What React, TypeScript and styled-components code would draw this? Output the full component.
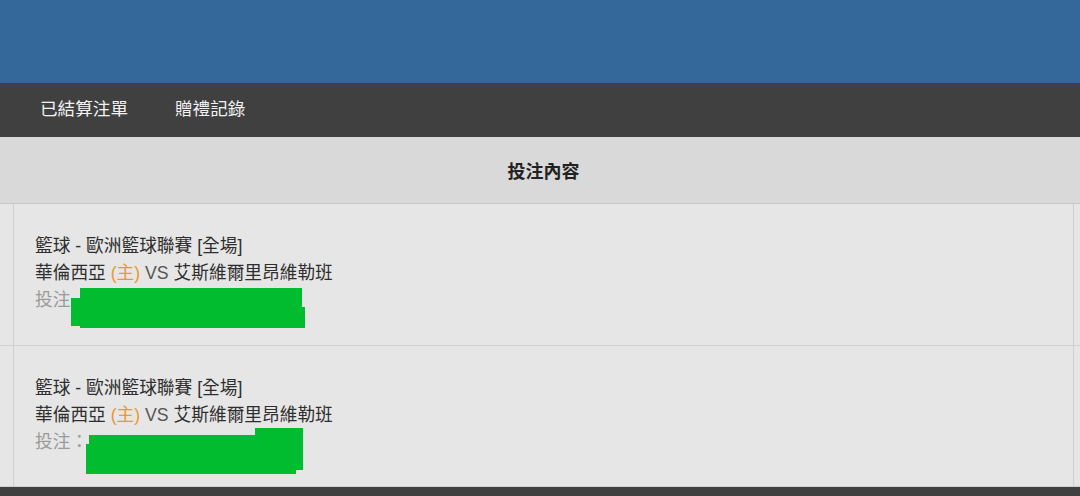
import React from "react";
import styled, { createGlobalStyle } from "styled-components";

const Global = createGlobalStyle`
  html, body { margin: 0; padding: 0; background: #404040; }
  body {
    font-family: "Liberation Sans", "Noto Sans CJK TC", sans-serif;
    width: 1080px;
    height: 496px;
    overflow: hidden;
  }
`;

const Page = styled.div`
  display: flex;
  flex-direction: column;
  width: 1080px;
  height: 496px;
  background: #404040;
`;

const TopBar = styled.header`
  height: 83px;
  background: #34679a;
`;

const Nav = styled.nav`
  height: 54px;
  background: #404040;
  display: flex;
  align-items: center;
  gap: 47px;
  padding-left: 40px;
`;

const NavItem = styled.a`
  color: #f2f2f2;
  font-size: 17.6px;
  line-height: 1;
  text-decoration: none;
`;

const Table = styled.div`
  display: grid;
  grid-template-columns: 13px 1fr 6px;
  background: #e6e6e6;
`;

const HeadCell = styled.div`
  height: 66px;
  background: #d9d9d9;
  border-bottom: 1px solid #c8c8c8;
  display: flex;
  align-items: center;
  justify-content: center;
  font-weight: bold;
  font-size: 18px;
  color: #222;
`;

const SideCell = styled.div`
  background: #e6e6e6;
  border-bottom: 1px solid #d0d0d0;
`;

const BodyCell = styled.div`
  height: 141.5px;
  box-sizing: border-box;
  padding: 29px 0 0 21px;
  border-left: 1px solid #d0d0d0;
  border-right: 1px solid #d0d0d0;
  border-bottom: 1px solid #d0d0d0;
  display: flex;
  flex-direction: column;
`;

const Line = styled.div<{ $muted?: boolean }>`
  position: relative;
  font-size: 17.7px;
  line-height: 27px;
  color: ${(p) => (p.$muted ? "#9a9a9a" : "#2e2e2e")};
  white-space: nowrap;
`;

const Home = styled.span`
  color: #f0962e;
`;

const Vs = styled.span`
  color: #555;
`;

const Redact = styled.svg`
  position: absolute;
  pointer-events: none;
`;

const Footer = styled.div`
  flex: 1;
  background: #404040;
`;

type Row = {
  betLabel: string;
  redact: { left: number; top: number; w: number; h: number; points: string };
};

const rows: Row[] = [
  {
    betLabel: "投注",
    redact: {
      left: 36,
      top: 1,
      w: 234,
      h: 40,
      points: "9,0 231,0 231,19 234,19 234,40 9,40 9,38 0,38 0,10 9,10",
    },
  },
  {
    betLabel: "投注：",
    redact: {
      left: 51,
      top: -1,
      w: 217,
      h: 46,
      points: "3,7 169,7 169,0 217,0 217,42 210,42 210,46 0,46 0,16 3,16",
    },
  },
];

export default function App() {
  return (
    <>
      <Global />
      <Page>
        <TopBar />
        <Nav>
          <NavItem>已結算注單</NavItem>
          <NavItem>贈禮記錄</NavItem>
        </Nav>
        <Table>
          <HeadCell />
          <HeadCell>投注內容</HeadCell>
          <HeadCell />
          {rows.map((r, i) => (
            <React.Fragment key={i}>
              <SideCell />
              <BodyCell>
                <Line>籃球 - 歐洲籃球聯賽 [全場]</Line>
                <Line>
                  華倫西亞 <Home>(主)</Home> <Vs>VS</Vs> 艾斯維爾里昂維勒班
                </Line>
                <Line $muted>
                  {r.betLabel}
                  <Redact
                    width={r.redact.w}
                    height={r.redact.h}
                    viewBox={`0 0 ${r.redact.w} ${r.redact.h}`}
                    style={{ left: r.redact.left, top: r.redact.top }}
                  >
                    <polygon points={r.redact.points} fill="#00bc2e" />
                  </Redact>
                </Line>
              </BodyCell>
              <SideCell />
            </React.Fragment>
          ))}
        </Table>
        <Footer />
      </Page>
    </>
  );
}
